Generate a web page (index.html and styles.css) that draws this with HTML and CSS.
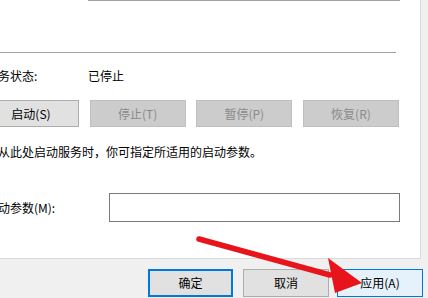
FILE: index.html
```html
<!DOCTYPE html>
<html lang="zh-CN">
<head>
<meta charset="utf-8">
<title>服务属性</title>
<link rel="stylesheet" href="styles.css">
</head>
<body>
<div class="dialog">
  <div class="page">
    <div class="topline"></div>
    <div class="sep"></div>
    <div class="status">
      <span class="label">服务状态:</span>
      <span class="value">已停止</span>
    </div>
    <div class="btns">
      <button class="btn">启动(S)</button>
      <button class="btn disabled">停止(T)</button>
      <button class="btn disabled">暂停(P)</button>
      <button class="btn disabled">恢复(R)</button>
    </div>
    <div class="desc">从此处启动服务时，你可指定所适用的启动参数。</div>
    <div class="param">
      <span class="plabel">启动参数(M):</span>
      <div class="input"></div>
    </div>
  </div>
  <div class="footer">
    <button class="fbtn ok">确定</button>
    <button class="fbtn cancel">取消</button>
    <button class="fbtn apply">应用(A)</button>
  </div>
  <svg class="arrow" width="428" height="298" viewBox="0 0 428 298">
    <line x1="199" y1="239" x2="330" y2="275" stroke="#e8141c" stroke-width="5.5" stroke-linecap="round"/>
    <polygon points="328,258 362,283 335,293" fill="#e8141c"/>
  </svg>
</div>
</body>
</html>
```

FILE: styles.css
```css
html, body {
  margin: 0;
  padding: 0;
}
body {
  width: 428px;
  height: 298px;
  overflow: hidden;
  background: #f0f0f0;
  font-family: "Noto Sans CJK SC", "Noto Sans", sans-serif;
  font-size: 12px;
  color: #000;
}
.dialog {
  position: relative;
  width: 428px;
  height: 298px;
  overflow: hidden;
}
.page {
  box-sizing: border-box;
  width: 421px;
  height: 259px;
  background: #fff;
  border-right: 1px solid #dadada;
  border-bottom: 1px solid #dadada;
  display: flex;
  flex-direction: column;
}
.topline {
  margin-left: 88px;
  width: 312px;
  height: 1px;
  background: #a0a0a0;
}
.sep {
  margin-top: 51px;
  width: 396px;
  height: 1px;
  background: #a0a0a0;
}
.status {
  margin-top: 15px;
  margin-left: -14px;
  height: 16px;
  line-height: 16px;
  display: flex;
  white-space: nowrap;
}
.status .label {
  width: 102px;
}
.btns {
  margin-top: 16px;
  margin-left: -17px;
  width: 416px;
  height: 27px;
  display: flex;
  justify-content: space-between;
}
.btn {
  width: 96px;
  height: 27px;
  padding: 0;
  margin: 0;
  background: #e1e1e1;
  border: 1px solid #adadad;
  font-family: inherit;
  font-size: 12px;
  color: #000;
  line-height: 16px;
}
.btn.disabled {
  background: #cccccc;
  border-color: #bfbfbf;
  color: #8a8a8a;
}
.desc {
  margin-top: 17px;
  margin-left: -2px;
  line-height: 16px;
  white-space: nowrap;
}
.param {
  margin-top: 33px;
  margin-left: -14px;
  display: flex;
  align-items: center;
  white-space: nowrap;
}
.plabel {
  width: 123px;
  line-height: 16px;
}
.input {
  box-sizing: border-box;
  width: 291px;
  height: 29px;
  border: 1px solid #7a7a7a;
  background: #fff;
}
.footer {
  padding-top: 10px;
  padding-left: 148px;
  display: flex;
}
.fbtn {
  box-sizing: border-box;
  height: 28px;
  padding: 0;
  margin: 0;
  background: #e1e1e1;
  border: 1px solid #adadad;
  font-family: inherit;
  font-size: 12px;
  color: #000;
  line-height: 16px;
}
.fbtn.ok {
  width: 85px;
  border: 2px solid #0078d7;
}
.fbtn.cancel {
  width: 86px;
  margin-left: 10px;
}
.fbtn.apply {
  width: 86px;
  margin-left: 8px;
  background: #e5f1fb;
  border-color: #0078d7;
}
.arrow {
  position: absolute;
  left: 0;
  top: 0;
  pointer-events: none;
}
```
